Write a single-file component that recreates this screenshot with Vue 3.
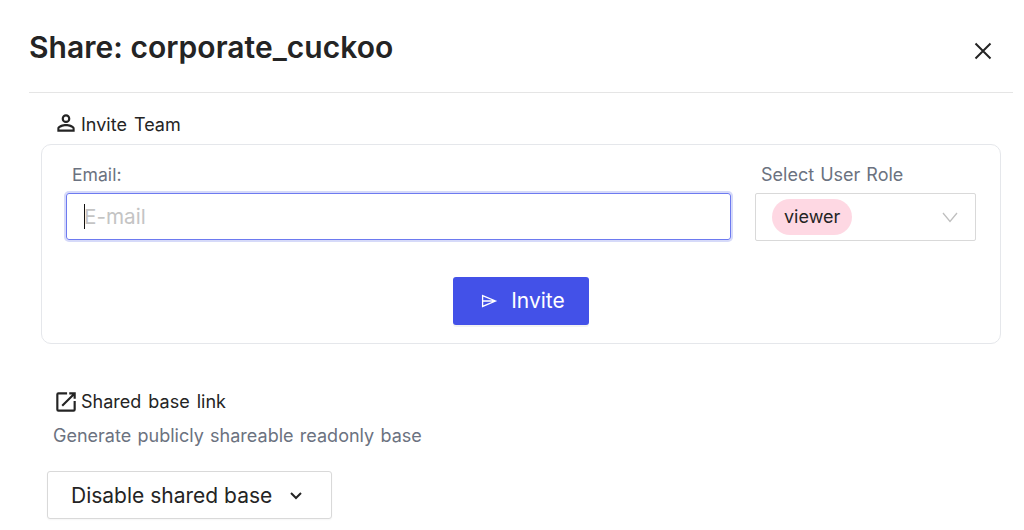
<template>
  <div class="modal">
    <header class="head">
      <h1 class="title">Share: corporate_cuckoo</h1>
      <svg class="close" width="24" height="24" viewBox="0 0 24 24" fill="none" stroke="#242424" stroke-width="2"><path d="M4.5 4.5 19.5 19.5M19.5 4.5 4.5 19.5" /></svg>
    </header>
    <div class="body">
      <div class="section-title invite-title">
        <svg class="person" width="26" height="26" viewBox="0 0 24 24" fill="#242424"><path d="M12 4a4 4 0 1 1 0 8 4 4 0 0 1 0-8Zm0 2a2 2 0 1 0 0 4 2 2 0 0 0 0-4Zm0 7c2.7 0 8 1.3 8 4v3H4v-3c0-2.7 5.3-4 8-4Zm0 1.9c-3 0-6.1 1.5-6.1 2.1v1.1h12.2V17c0-.6-3.1-2.1-6.1-2.1Z" /></svg>
        <span>Invite Team</span>
      </div>
      <section class="card">
        <div class="fields">
          <div class="email">
            <label class="label email-label">Email:</label>
            <div class="input"><i class="caret"></i><span>E-mail</span></div>
          </div>
          <div class="role">
            <label class="label role-label">Select User Role</label>
            <div class="select">
              <span class="chip">viewer</span>
              <svg class="role-chevron" width="16" height="16" viewBox="0 0 16 16" fill="none" stroke="#bfbfbf" stroke-width="1.3"><path d="M1 4l7 8.5L15 4" /></svg>
            </div>
          </div>
        </div>
        <div class="actions">
          <button class="invite">
            <svg width="18" height="18" viewBox="0 0 18 18" fill="none" stroke="#fff" stroke-width="1.3"><path d="M2.6 3.6 15.5 9 2.6 14.4V3.6ZM2.6 9h12.9" /></svg>
            <span class="invite-text">Invite</span>
          </button>
        </div>
      </section>
      <div class="section-title link-title">
        <svg width="26" height="26" viewBox="0 0 24 24" fill="#242424"><path d="M5 3h8v2H5v14h14v-8h2v8a2 2 0 0 1-2 2H5a2 2 0 0 1-2-2V5a2 2 0 0 1 2-2Zm10 0h6v6h-2V6.4l-9.8 9.8-1.4-1.4L17.6 5H15V3Z" /></svg>
        <span>Shared base link</span>
      </div>
      <p class="desc">Generate publicly shareable readonly base</p>
      <button class="disable">
        <span>Disable shared base</span>
        <svg width="16" height="16" viewBox="0 0 16 16" fill="none" stroke="#242424" stroke-width="2"><path d="M3 6l5 5 5-5" /></svg>
      </button>
    </div>
  </div>
</template>

<script setup>
</script>

<style>
html, body { margin: 0; background: #fff; }
</style>

<style scoped>
.modal {
  width: 1024px;
  height: 530px;
  overflow: hidden;
  box-sizing: border-box;
  padding: 0 11px 0 29px;
  font-family: Inter, "Liberation Sans", sans-serif;
  color: #242424;
}
.head {
  height: 92px;
  border-bottom: 1px solid #e5e5e5;
  display: flex;
  justify-content: space-between;
  align-items: flex-start;
}
.title {
  margin: 27px 0 0;
  font-size: 30px;
  line-height: 40px;
  font-weight: 600;
  letter-spacing: 0.04px;
}
.close { margin: 39px 18px 0 0; }
.body { display: flex; flex-direction: column; align-items: flex-start; }
.section-title {
  display: flex;
  align-items: center;
  gap: 2px;
  font-size: 18px;
  line-height: 26px;
  margin-left: 24px;
  word-spacing: 2px;
}
.person { margin-top: -4px; }
.invite-title { margin-top: 19px; }
.card {
  width: 960px;
  height: 200px;
  box-sizing: border-box;
  margin: 6px 0 0 12px;
  border: 1px solid #e5e7eb;
  border-radius: 10px;
  padding: 18px 24px 0;
}
.fields { display: flex; gap: 24px; }
.email { width: 665px; }
.role { width: 221px; }
.label {
  display: block;
  line-height: 24px;
  color: #6b7280;
  margin-left: 6px;
  height: 30px;
}
.email-label { font-size: 17.6px; }
.role-label { font-size: 18px; word-spacing: 1px; }
.input {
  height: 47px;
  box-sizing: border-box;
  border: 1px solid #6d7af0;
  border-radius: 3px;
  box-shadow: 0 0 0 2px #d6daf9;
  padding-left: 17px;
  display: flex;
  align-items: center;
  position: relative;
  font-size: 20.7px;
  color: #c4c4c4;
}
.caret {
  position: absolute;
  left: 17px;
  top: 10px;
  width: 1px;
  height: 25px;
  background: #111;
}
.select {
  height: 48px;
  box-sizing: border-box;
  border: 1px solid #d9d9d9;
  border-radius: 2px;
  display: flex;
  align-items: center;
  justify-content: space-between;
  padding: 0 17px 0 16px;
}
.role-chevron { margin-top: -1px; }
.chip {
  background: #fed8e3;
  border-radius: 18px;
  font-size: 18px;
  line-height: 36px;
  padding: 0 12px;
}
.actions { display: flex; justify-content: center; margin-top: 36px; }
.invite {
  width: 136px;
  height: 48px;
  border: 0;
  border-radius: 3px;
  padding: 0 0 0 3px;
  background: #4351e8;
  color: #fff;
  font: inherit;
  font-size: 21px;
  display: flex;
  align-items: center;
  justify-content: center;
  gap: 13px;
  box-shadow: 0 2px 0 rgba(0, 0, 0, 0.05);
}
.invite-text { margin-top: -2px; }
.link-title { margin-top: 45px; }
.desc {
  margin: 9px 0 0 24px;
  font-size: 18px;
  line-height: 24px;
  color: #6b7280;
  word-spacing: 1.3px;
}
.disable {
  margin: 23px 0 0 18px;
  width: 285px;
  height: 48px;
  border: 1px solid #d9d9d9;
  border-radius: 3px;
  padding: 0 0 0 23px;
  background: #fff;
  color: #242424;
  font: inherit;
  font-size: 21px;
  display: flex;
  align-items: center;
  gap: 16px;
  box-shadow: 0 1px 2px rgba(0, 0, 0, 0.04);
}
</style>
